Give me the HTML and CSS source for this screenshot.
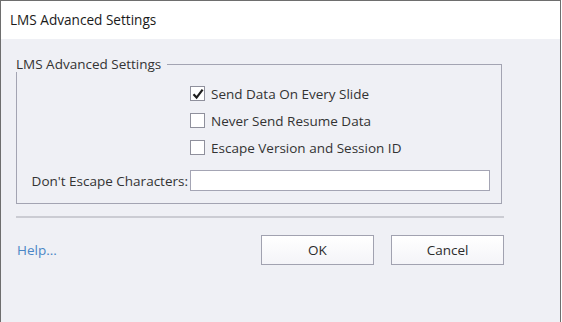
FILE: index.html
```html
<!DOCTYPE html>
<html lang="en">
<head>
    <meta charset="UTF-8">
    <meta name="viewport" content="width=device-width, initial-scale=1.0">
    <title>LMS Advanced Settings</title>
    <link rel="stylesheet" href="styles.css">
</head>
<body>
    <div class="window">
        <div class="title-bar">LMS Advanced Settings</div>

        <div class="dialog-body">
            <div class="group">
                <div class="group-head">
                    <span class="group-title">LMS Advanced Settings</span>
                    <span class="group-rule"></span>
                </div>
                <div class="group-body">
                    <label class="check-row">
                        <span class="check-box checked">
                            <svg width="12" height="12" viewBox="0 0 12 12"><path d="M1.5 6.2 L4.6 9.6 L10.6 1.6" fill="none" stroke="#1e1e1e" stroke-width="2.2"/></svg>
                        </span>
                        Send Data On Every Slide
                    </label>
                    <label class="check-row">
                        <span class="check-box"></span>
                        Never Send Resume Data
                    </label>
                    <label class="check-row">
                        <span class="check-box"></span>
                        Escape Version and Session ID
                    </label>

                    <div class="field-row">
                        <span class="field-label">Don't Escape Characters:</span>
                        <input type="text" class="field-input">
                    </div>
                </div>
            </div>

            <div class="separator"></div>

            <div class="actions">
                <a href="#" class="help-link">Help...</a>
                <div class="buttons">
                    <button class="dlg-button">OK</button>
                    <button class="dlg-button">Cancel</button>
                </div>
            </div>
        </div>
    </div>
</body>
</html>
```

FILE: styles.css
```css
body {
    margin: 0;
    padding: 0;
    background-color: #ffffff;
    font-family: "Open Sans", "Noto Sans", sans-serif;
    color: #2b2b2b;
}

.window {
    width: 559px;
    height: 322px;
    border: 1px solid #6e6e6e;
    border-bottom: none;
    background-color: #eff0f5;
    overflow: hidden;
}

.title-bar {
    height: 38px;
    background-color: #ffffff;
    font-size: 13.6px;
    line-height: 38px;
    padding-left: 9px;
    color: #1a1a1a;
}

.dialog-body {
    padding: 17px 0 0 15px;
    width: 488px;
}

.group {
    width: 486px;
}

.group-head {
    display: flex;
    height: 16px;
}

.group-title {
    font-size: 13.5px;
    line-height: 16px;
    padding-right: 6px;
    color: #333333;
}

.group-rule {
    flex: 1;
    margin-top: 8px;
    border-top: 1px solid #a3a4b2;
    border-right: 1px solid #a3a4b2;
}

.group-body {
    border: 1px solid #a3a4b2;
    border-top: none;
    padding: 8px 11px 12px 173px;
}

.check-row {
    display: flex;
    align-items: center;
    height: 27px;
    font-size: 13.5px;
    color: #333333;
}

.check-box {
    width: 13px;
    height: 13px;
    border: 1px solid #8f909c;
    background-color: #ffffff;
    margin-right: 6px;
    display: flex;
    align-items: center;
    justify-content: center;
}

.field-row {
    display: flex;
    align-items: center;
    margin-top: 9px;
    margin-left: -173px;
}

.field-label {
    width: 171px;
    text-align: right;
    font-size: 13.5px;
    color: #333333;
    margin-right: 2px;
}

.field-input {
    width: 296px;
    height: 19px;
    margin: 0;
    padding: 0 1px;
    border: 1px solid #a4a5b4;
    background-color: #ffffff;
    outline: none;
}

.separator {
    margin-top: 12px;
    height: 0;
    border-top: 2px solid #cbccd3;
}

.actions {
    display: flex;
    align-items: center;
    justify-content: space-between;
    margin-top: 17px;
}

.help-link {
    color: #4a86c6;
    font-size: 13.5px;
    text-decoration: none;
    margin-left: 1px;
}

.buttons {
    display: flex;
    gap: 17px;
}

.dlg-button {
    width: 113px;
    height: 30px;
    font-family: "Open Sans", "Noto Sans", sans-serif;
    font-size: 13.5px;
    color: #2b2b2b;
    border: 1px solid #a1a2b0;
    border-radius: 0;
    background: linear-gradient(#ffffff, #f4f4f8);
    padding: 0;
}
```
